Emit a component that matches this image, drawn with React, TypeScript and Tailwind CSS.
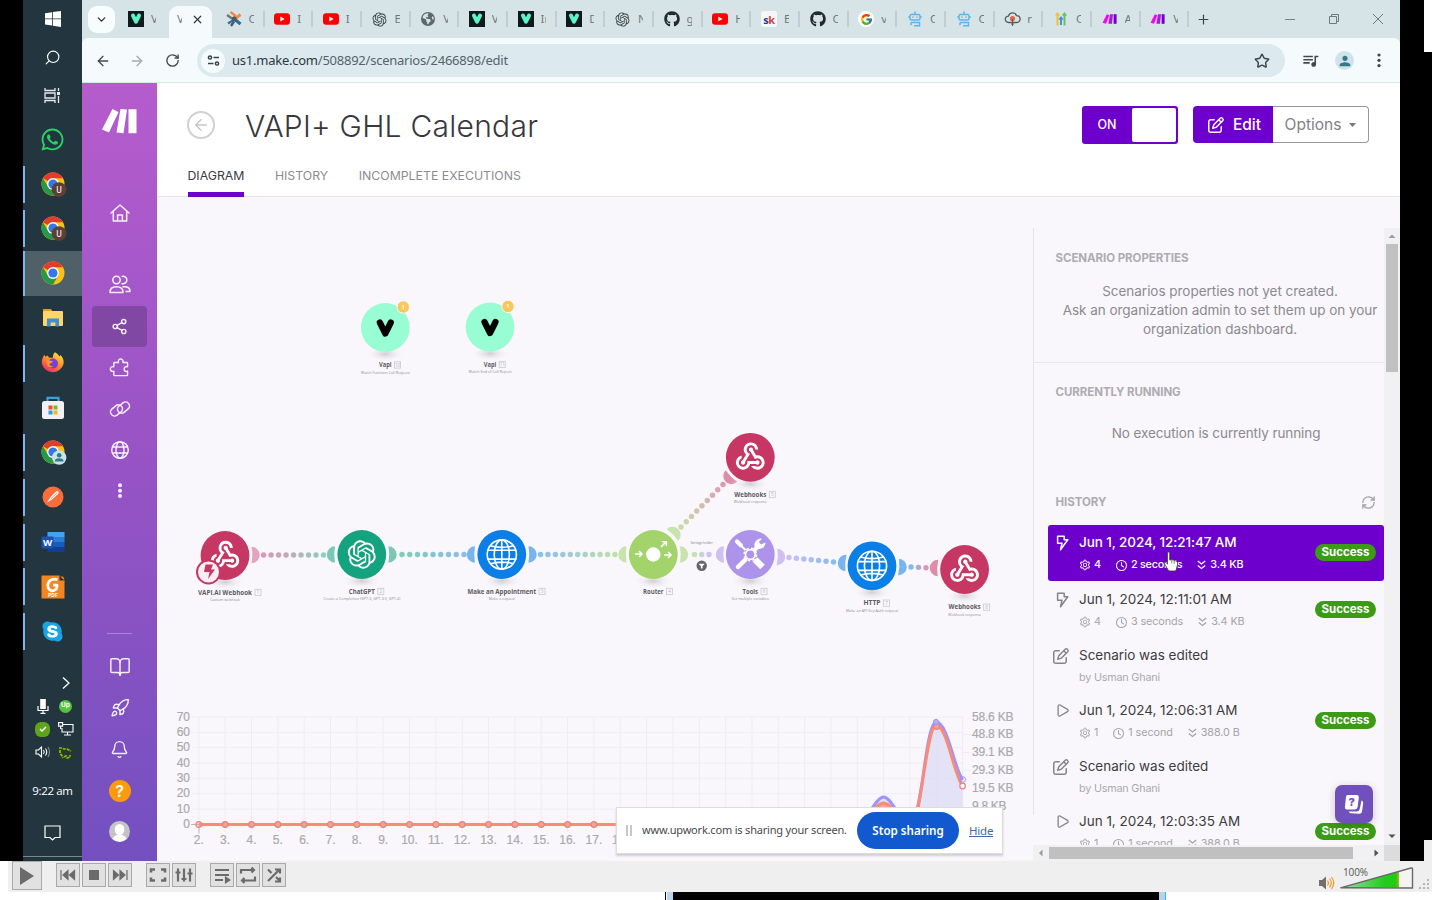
import React from "react";
import { ArrowLeft, ArrowRight, RotateCw, RefreshCw, ChevronDown, Plus, X, Search, Star, Users, Share2, Rocket, Bell, BookOpen, Play } from "lucide-react";
import { FaGithub, FaWhatsapp, FaSkype } from "react-icons/fa";
import { FaRegPenToSquare, FaRegClock, FaEarthAmericas } from "react-icons/fa6";
import { FcGoogle } from "react-icons/fc";
import { RiOpenaiFill } from "react-icons/ri";
import { MdWebhook, MdQueueMusic, MdPerson } from "react-icons/md";
import { AiOutlineSetting } from "react-icons/ai";
import { PiPuzzlePiece } from "react-icons/pi";

/* ---------- small drawings ---------- */

const VapiFav = () => (
  <svg width="16" height="16" viewBox="0 0 16 16" className="shrink-0">
    <rect width="16" height="16" fill="#10191c" />
    <path d="M5 4.6 L8 10.6 L11 4.6" fill="none" stroke="#5cf5c8" strokeWidth="4" strokeLinecap="round" strokeLinejoin="round" />
  </svg>
);
const YoutubeFav = () => (
  <svg width="16" height="16" viewBox="0 0 16 16">
    <rect y="2.2" width="16" height="11.6" rx="3" fill="#f00" />
    <path d="M6.3 5.6 L10.6 8 L6.3 10.4Z" fill="#fff" />
  </svg>
);
const PinwheelFav = () => (
  <svg width="16" height="16" viewBox="0 0 16 16" strokeWidth="2.4" fill="none">
    <path d="M4.500 1 9 4.500 8 7" stroke="#ee8a45" /><path d="M14.500 3.500 10 7" stroke="#f08b46" strokeWidth="3" />
    <path d="M1 4 6 7.500" stroke="#6b7780" /><path d="M14.500 13 9.500 9" stroke="#2c6aa6" strokeWidth="3.200" />
    <path d="M2 12.500 7.500 9" stroke="#2f74b4" /><path d="M5 15 8 10.500" stroke="#4d5a63" /><circle cx="8.200" cy="8" r="2.600" fill="#4d5a63" />
  </svg>
);
const SkFav = () => (
  <div className="flex size-4 items-center justify-center rounded-[3px] bg-[#f7f7f9] font-['Open_Sans',sans-serif] text-[11px] font-bold leading-none tracking-[-0.5px]">
    <span className="text-[#24408e]">s</span><span className="text-[#d8433a]">k</span>
  </div>
);
const RobotFav = () => (
  <svg width="16" height="16" viewBox="0 0 16 16" fill="none" stroke="#5db5ee" strokeWidth="1.5">
    <rect x="3" y="3.4" width="10" height="5.6" rx="1.5" /><path d="M8 3V.6M2.8 6H1.2M13.2 6h1.6M4 11.6h8.5v3.2H7M4 11.6v2.6" />
    <path d="M6 5.4v1.4M10 5.4v1.4" />
  </svg>
);
const CloudFav = () => (
  <svg width="17" height="16" viewBox="0 0 16 16" fill="none">
    <path d="M4 11.5a3.2 3.2 0 0 1 0-6.4 4.2 4.2 0 0 1 8-.4 3.4 3.4 0 0 1 .4 6.8z" stroke="#555d61" strokeWidth="1.3" />
    <circle cx="8" cy="7.6" r="2.6" fill="#e9663c" /><path d="M8 8v7M6.6 13h2.8" stroke="#6d5a55" strokeWidth="1.2" />
  </svg>
);
const ArrowsFav = () => (
  <svg width="16" height="16" viewBox="0 0 16 16" fill="none" strokeWidth="2">
    <path d="M4.500 14.500V3M2.800 4.600 4.500 2.500l1.700 2.100" stroke="#efc22f" /><path d="M8 14V7M6.4 8.600 8 6.500l1.700 2.100" stroke="#3f95df" />
    <path d="M11.500 14.500V3M9.800 4.600 11.500 2.500l1.700 2.100" stroke="#6cc05d" />
  </svg>
);
const MakeFav = () => (
  <svg width="16" height="16" viewBox="0 0 16 16">
    <path d="M4.8 3.2 7.4 4.2 4 12.8 .6 11.8Z" fill="#ff00f5" /><path d="M8 3.2h3L10 12.8H6.4Z" fill="#b514e0" /><path d="M11.600 3.2h3v9.6h-3Z" fill="#6d00cc" />
  </svg>
);

const Chrome = ({ badge }: { badge?: "U" | "person" }) => (
  <svg width="26" height="26" viewBox="0 0 26 26" className="ml-[2px] mt-[1px]">
    <circle cx="12" cy="12" r="11.5" fill="#fbc116" />
    <path d="M12 12 L2 6.3 A11.5 11.5 0 0 1 22 6.3 L12 6.3Z" fill="#e33b2e" />
    <path d="M2 6.3 A11.5 11.5 0 0 0 12 23.5 L17 14.9 L12 17.5 L7.1 15Z" fill="#279847" />
    <circle cx="12" cy="12" r="5.9" fill="#fff" /><circle cx="12" cy="12" r="4.6" fill="#3478e8" />
    {badge === "U" && (<><circle cx="18" cy="17.6" r="7.4" fill="#5c4037" /><text x="18" y="20.800" textAnchor="middle" fontSize="8.500" fontWeight="500" fill="#e8dfdc" fontFamily="Roboto">U</text></>)}
    {badge === "person" && (<><circle cx="18.2" cy="17.6" r="7.2" fill="#c9e3ea" /><circle cx="18.2" cy="15.2" r="2.3" fill="#35788a" /><path d="M13.8 21.4q0-3.2 4.4-3.2t4.4 3.2Z" fill="#35788a" /></>)}
  </svg>
);
const Explorer = () => (
  <svg width="22" height="20" viewBox="0 0 22 20">
    <path d="M1 1h8l2 3H1Z" fill="#e3a008" /><rect x="1" y="3" width="20" height="15" rx="1" fill="#fcd667" />
    <path d="M5 18.5v-8h12v8h-3.6v-4H8.6v4Z" fill="#3c8fd8" />
  </svg>
);
const Firefox = () => (
  <svg width="24" height="24" viewBox="0 0 24 24">
    <defs><linearGradient id="ffx" x1="0.8" y1="0" x2="0.2" y2="1"><stop offset="0" stopColor="#ffe83b" /><stop offset=".45" stopColor="#ff9226" /><stop offset="1" stopColor="#f0226b" /></linearGradient></defs>
    <path d="M14 1.2c3 1.5 3.5 3.4 4.6 4.2l.6-1.4c2.7 2.2 3.9 5.600 3.300 9A11.200 11.200 0 0 1 .8 12.600C.7 9.300 1.500 6 3.500 3.800l.8 2 2.500-1.400 1 2 C10 7 11 7 12 6.400 11.700 4.500 12.400 2.500 14 1.200Z" fill="url(#ffx)" />
    <circle cx="12" cy="12.600" r="5" fill="#7b3fd6" /><path d="M5.500 9.500c3-1 4.500.5 6.500.8-1 1.700-3 1.800-3.600 2.800 0 2 2.300 2.700 4 2-3 3.200-7.200 0-6.900-5.600Z" fill="#ff9a24" />
  </svg>
);
const Store = () => (
  <svg width="24" height="24" viewBox="0 0 24 24">
    <path d="M6.500 6V1.800h11V6" fill="none" stroke="#35a3e2" strokeWidth="2.200" /><rect x="1" y="5" width="22" height="18" rx="2.500" fill="#f1f1f3" />
    <path d="M7.500 9.500h4v4h-4Z" fill="#e8512b" /><path d="M12.500 9.500h4v4h-4Z" fill="#7eb72f" /><path d="M7.500 14.500h4v4h-4Z" fill="#2a9fe2" /><path d="M12.500 14.500h4v4h-4Z" fill="#f4b61e" />
  </svg>
);
const Postman = () => (
  <svg width="22" height="22" viewBox="0 0 22 22"><circle cx="11" cy="11" r="10.500" fill="#fb6c3b" /><path d="M5 16.500 8.500 11l5.500-5.500q2-1 2.500.500t-1 2.500L10 13.500Z" fill="#fff" /><path d="M9 12.500l6-5.500" stroke="#fb6c3b" strokeWidth=".7" /></svg>
);
const Word = () => (
  <svg width="24" height="22" viewBox="0 0 24 22">
    <rect x="6.500" y="1" width="17" height="5.500" fill="#41a3ec" /><rect x="6.500" y="6" width="17" height="5" fill="#2b7cd3" /><rect x="6.500" y="11" width="17" height="5" fill="#185abd" /><rect x="6.500" y="16" width="17" height="5" fill="#103f91" />
    <rect x=".5" y="5.500" width="12" height="12" rx="1" fill="#1a52b0" /><text x="6.500" y="15" textAnchor="middle" fontSize="9.500" fontWeight="700" fill="#fff" fontFamily="Open Sans">W</text>
  </svg>
);
const Pdf = () => (
  <svg width="24" height="24" viewBox="0 0 24 24">
    <path d="M.5.5h18l5 5v18H.5Z" fill="#f4861f" /><path d="M18.500.5v5h5" fill="#26363f" /><path d="M20.500 1.500l2.500 2.500" stroke="#f4861f" strokeWidth="1.500" />
    <path d="M16.500 4.600C10.500 2.800 6.800 6.500 6.800 10.500c0 4 3.500 6 6.200 5 2.500-.8 3.300-2.800 3-5.300h-4" fill="none" stroke="#fff" strokeWidth="2.800" strokeLinejoin="round" />
    <text x="12" y="22.400" textAnchor="middle" fontSize="5" fontWeight="700" fill="#fff" fontFamily="Inter">PDF</text>
  </svg>
);
const Skype = () => (
  <span className="relative flex items-center justify-center before:absolute before:size-[15px] before:rounded-full before:bg-white"><FaSkype size={23} color="#19a5e3" className="relative" /></span>
);

/* ---------- desktop taskbar ---------- */

const apps: { icon: React.ReactNode; open?: boolean; active?: boolean }[] = [
  { icon: <FaWhatsapp size={25} color="#25d366" /> },
  { icon: <Chrome badge="U" />, open: true },
  { icon: <Chrome badge="U" />, open: true },
  { icon: <Chrome />, open: true, active: true },
  { icon: <Explorer /> },
  { icon: <Firefox />, open: true },
  { icon: <Store /> },
  { icon: <Chrome badge="person" />, open: true },
  { icon: <Postman />, open: true },
  { icon: <Word />, open: true },
  { icon: <Pdf />, open: true },
  { icon: <Skype />, open: true },
];

function Taskbar() {
  return (
    <aside className="flex h-full w-[59px] shrink-0 flex-col bg-[#23363f] text-white">
      <div className="flex h-[38px] items-center justify-center">
        <svg width="16" height="16" viewBox="0 0 16 16" fill="#fff"><path d="M0 2.200 7 1.200V7.500H0ZM7.800 1.100 16 0V7.500H7.800ZM0 8.300H7V14.600L0 13.600ZM7.800 8.300H16V16L7.800 14.800Z" /></svg>
      </div>
      <div className="flex h-[38px] items-center justify-center"><Search size={17} strokeWidth={1.6} className="-scale-x-100" /></div>
      <div className="flex h-[41px] items-center justify-center pb-[3px]">
        <svg width="17" height="15" viewBox="0 0 17 15" fill="none" stroke="#e6eaec" strokeWidth="1.300"><path d="M1 0v2.500h10V0M1 15v-2.500h10V15M1 5h10v5H1ZM14.500 0v3M14.500 8v7" /><path d="M13 5.500h3" strokeWidth="3" /></svg>
      </div>
      {apps.map((a, i) => (
        <div key={i} className={`flex h-[44.750px] shrink-0 items-center ${a.active ? "bg-[#4f6068]" : ""}`}>
          <div className={`w-[2px] ${a.open ? "bg-[#76b9ed]" : ""} ${a.active ? "h-full" : "h-[37px]"}`} />
          <div className="flex flex-1 justify-center pr-[2px]">{a.icon}</div>
        </div>
      ))}
      <div className="mt-[22px] flex justify-end pr-[11px]"><svg width="10" height="14" viewBox="0 0 10 14" fill="none" stroke="#fff" strokeWidth="1.300"><path d="M2 1.500 8 7 2 12.500" /></svg></div>
      <div className="mt-[6px] grid grid-cols-2 gap-y-[3px] pl-[8px] pr-[5px]">
        <div className="flex h-5 items-center justify-center"><svg width="12" height="16" viewBox="0 0 12 16" fill="none" stroke="#fff" strokeWidth="1.200"><rect x="3.200" y="1" width="5.600" height="10" fill="#fff" stroke="none" /><path d="M1 8v4.500h10V8M6 12.500V15M3.500 15.300h5" /></svg></div>
        <div className="flex h-5 items-center justify-center"><span className="flex size-[13px] items-center justify-center rounded-full bg-[#56c33c] font-['Inter',sans-serif] text-[6.500px] font-bold">Up</span></div>
        <div className="flex h-5 items-center justify-center"><span className="flex size-[15px] items-center justify-center rounded-[6px] bg-[#5fa51b]"><svg width="8" height="8" viewBox="0 0 8 8" fill="none" stroke="#fff" strokeWidth="1.500"><path d="M1 4l2 2 4-4" /></svg></span></div>
        <div className="flex h-5 items-center justify-center"><svg width="16" height="14" viewBox="0 0 16 14" fill="none" stroke="#fff" strokeWidth="1.100"><path d="M5 2.500h10v7.500H4V6M9.500 10v3M6 13h7M.6.6h4v3.500h-4ZM2.600 4v3" /></svg></div>
        <div className="flex h-5 items-center justify-center"><svg width="16" height="14" viewBox="0 0 16 14" fill="none" stroke="#fff" strokeWidth="1.100"><path d="M1 5h2.500L6.500 2v10L3.500 9H1Z" /><path d="M8.500 5q1.500 2 0 4M10.500 3.500q2.500 3.500 0 7" /><path d="M13 2q3 5 0 10" stroke="#7f8b91" /></svg></div>
        <div className="flex h-5 items-center justify-center"><svg width="15" height="14" viewBox="0 0 15 14" fill="none" stroke="#7fc800" strokeWidth="1.700"><rect width="15" height="14" fill="#2b3532" stroke="none" /><path d="M1 3h3l2 1h3l4 2M2 5v3l2 3 1 2M6 12l2-1 1 2 3-1v-2" strokeDasharray="3 1" /></svg></div>
      </div>
      <div className="mt-[21px] text-center font-['Open_Sans',sans-serif] text-[11.500px] leading-[16px] tracking-[-0.350px]">9:22 am</div>
      <div className="mt-[26px] flex justify-center"><svg width="17" height="16" viewBox="0 0 17 16" fill="none" stroke="#fff" strokeWidth="1.200"><path d="M1 1h15v11.500H11L8.500 15 6 12.500H1Z" /></svg></div>
      <div className="mt-auto h-[5px] border-t border-[#7c898f]" />
    </aside>
  );
}

/* ---------- browser chrome ---------- */

const tabs: [React.ReactNode, string][] = [
  [<PinwheelFav />, "C"], [<YoutubeFav />, "I"], [<YoutubeFav />, "I"], [<RiOpenaiFill size={17} color="#3c4447" />, "E"],
  [<FaEarthAmericas size={14} color="#5f676b" />, "V"], [<VapiFav />, "V"], [<VapiFav />, "In"], [<VapiFav />, "D"],
  [<RiOpenaiFill size={17} color="#3c4447" />, "N"], [<FaGithub size={16} color="#24292f" />, "g"], [<YoutubeFav />, "H"], [<SkFav />, "E"],
  [<FaGithub size={16} color="#24292f" />, "C"], [<span className="flex size-4 items-center justify-center rounded-full bg-white"><FcGoogle size={13} /></span>, "v"],
  [<RobotFav />, "C"], [<RobotFav />, "C"], [<CloudFav />, "r"], [<ArrowsFav />, "C"], [<MakeFav />, "A"], [<MakeFav />, "V"],
];

function TabLetter({ c }: { c: string }) {
  return <span className="w-[5px] overflow-hidden font-['Noto_Sans',sans-serif] text-[11.500px] leading-4 text-[#6f797d]">{c}</span>;
}

function Browser() {
  return (
    <header className="shrink-0 bg-[#d7e4e7]">
      <div className="flex h-[38px] items-center pl-[6px]">
        <div className="flex size-[27px] items-center justify-center rounded-[9px] bg-[#f7fcfd]"><ChevronDown size={13} strokeWidth={2.300} color="#26302f" /></div>
        <div className="ml-[13px] flex w-[36px] items-center gap-[7px]"><VapiFav /><TabLetter c="V" /></div>
        <div className="mt-[6px] flex h-[32px] w-[52px] items-start">
          <div className="h-full w-[5px] rounded-br-[8px] bg-[#d7e4e7]" />
          <div className="flex h-full w-[43px] items-center rounded-t-[9px] bg-[#f5fbfd] pb-[6px] pl-[8px]">
            <TabLetter c="V" /><X size={13} strokeWidth={2.200} className="ml-[9px]" color="#30383a" />
          </div>
        </div>
        {tabs.map(([icon, c], i) => (
          <div key={i} className="flex h-[16px] w-[48.680px] shrink-0 items-center border-r-2 border-[#c3cdd0] pl-[8.500px]">
            <div className="mr-[6px] flex w-[18px] justify-center">{icon}</div><TabLetter c={c} />
          </div>
        ))}
        <Plus size={15} className="ml-[7px]" strokeWidth={1.900} color="#3b4446" />
        <div className="ml-auto flex items-center gap-[34px] pr-[17px]">
          <svg width="10" height="10" stroke="#7b8487" fill="none"><path d="M0 5.500h10" /></svg>
          <svg width="10" height="10" viewBox="0 0 10 10" stroke="#70797b" fill="none"><path d="M.5 2.500h7v7h-7ZM2.500 2.500v-2h7v7h-2" /></svg>
          <svg width="10" height="10" viewBox="0 0 10 10" stroke="#70797b" fill="none"><path d="M0 0l10 10M10 0L0 10" /></svg>
        </div>
      </div>
      <div className="flex h-[45px] items-center rounded-t-[6px] border-b border-[#dce6e9] bg-[#f5fbfd] pl-[13px] pt-px text-[#404b4e]">
        <ArrowLeft size={16} strokeWidth={2} />
        <ArrowRight size={16} strokeWidth={2} className="ml-[18px] text-[#a4abad]" />
        <RotateCw size={15} strokeWidth={2.200} className="ml-[20px]" />
        <div className="ml-[17px] flex h-[33px] w-[1088px] items-center rounded-full bg-[#dceaef] pl-[4px] pr-[15px]">
          <div className="flex size-[24px] items-center justify-center rounded-full bg-[#f5fbfd]">
            <svg width="13" height="11" viewBox="0 0 13 11" fill="none" stroke="#37474b" strokeWidth="1.500"><circle cx="3" cy="2.500" r="1.600" /><path d="M6.500 2.500H12M1 8.500h5.500" /><circle cx="10" cy="8.500" r="1.600" /></svg>
          </div>
          <span className="ml-[7px] font-['Noto_Sans',sans-serif] text-[13px] tracking-[-0.240px] text-[#56636a]"><span className="text-[#2d383d]">us1.make.com</span>/508892/scenarios/2466898/edit</span>
          <Star size={16} strokeWidth={2.200} className="ml-auto" color="#3f484b" />
        </div>
        <MdQueueMusic size={19} className="ml-[16px]" />
        <span className="ml-[15px] flex size-[19px] items-center justify-center rounded-full bg-[#cfe4ea] text-[#35788a]"><MdPerson size={16} /></span>
        <svg width="4" height="15" viewBox="0 0 4 15" className="ml-[23px]" fill="#3b4649"><circle cx="2" cy="2" r="1.600" /><circle cx="2" cy="7.300" r="1.600" /><circle cx="2" cy="12.600" r="1.600" /></svg>
      </div>
    </header>
  );
}

/* ---------- Make side navigation ---------- */

const GlobeNav = () => (
  <svg width="20" height="20" viewBox="0 0 20 20" fill="none" stroke="currentColor" strokeWidth="1.500"><circle cx="10" cy="10" r="8.300" /><ellipse cx="10" cy="10" rx="4" ry="8.300" /><path d="M2.200 7h15.600M2.200 13h15.600" /></svg>
);
const LinkNav = () => (
  <svg width="22" height="18" viewBox="0 0 22 18" fill="none" stroke="currentColor" strokeWidth="1.500"><rect x="1" y="6.400" width="13" height="8" rx="4" transform="rotate(-38 7.500 10.400)" /><rect x="8" y="3.600" width="13" height="8" rx="4" transform="rotate(-38 14.500 7.600)" /></svg>
);
const HomeNav = () => (
  <svg width="20" height="18" viewBox="0 0 20 18" fill="none" stroke="currentColor" strokeWidth="1.500" strokeLinejoin="round" strokeLinecap="round"><path d="M1 9 10 1l9 8M3.300 7.500V17h13.400V7.500M7.600 17v-6h4.800v6" /></svg>
);
const UsersNav = () => (
  <svg width="22" height="19" viewBox="0 0 22 19" fill="none" stroke="currentColor" strokeWidth="1.500" strokeLinejoin="round"><circle cx="7.500" cy="5" r="3.700" /><path d="M12.500 1.700a3.700 3.700 0 1 1 0 6.600M1 17.500c0-4 2.500-5.700 6.500-5.700s6.500 1.700 6.500 5.700ZM13.500 11.800h2c3.500 0 5.500 1.700 5.500 4.700h-4.500" /></svg>
);

function NavItem({ children, active }: { children: React.ReactNode; active?: boolean }) {
  return <div className={`flex h-[41.300px] w-[55px] shrink-0 items-center justify-center rounded-[4px] text-white/90 ${active ? "bg-[#8048a3]" : ""}`}>{children}</div>;
}

function SideNav() {
  return (
    <nav className="flex h-full w-[75px] shrink-0 flex-col items-center bg-linear-to-b from-[#b65ccd] via-[#9653c5] to-[#7350c0]">
      <svg width="36" height="26" viewBox="0 0 36 26" className="mr-[1px] mt-[25px]" fill="#fff"><path d="M11.500 1 17.500 4 8 24.500 1 21.500ZM19.500 1l6.500.5L22.500 25.200l-7-.8ZM27.500 1.200H35.500V25.200h-8Z" /></svg>
      <div className="mt-[58px] flex flex-col items-center">
        <NavItem><HomeNav /></NavItem>
        <div className="mt-[31px]" />
        <NavItem><UsersNav /></NavItem>
        <NavItem active><Share2 size={17} strokeWidth={2} /></NavItem>
        <NavItem><PiPuzzlePiece size={22} /></NavItem>
        <NavItem><LinkNav /></NavItem>
        <NavItem><GlobeNav /></NavItem>
        <NavItem><svg width="6" height="16" viewBox="0 0 6 16" fill="currentColor"><circle cx="3" cy="2.300" r="2" /><circle cx="3" cy="7.700" r="2" /><circle cx="3" cy="13.100" r="2" /></svg></NavItem>
      </div>
      <div className="mt-[121px] mb-[12px] h-px w-[25px] bg-white/30" />
      <NavItem><BookOpen size={22} strokeWidth={1.600} /></NavItem>
      <NavItem><Rocket size={20} strokeWidth={1.700} /></NavItem>
      <NavItem><Bell size={19} strokeWidth={1.700} /></NavItem>
      <NavItem><span className="flex size-[22px] items-center justify-center rounded-full bg-[#fb9a0a] font-['Inter',sans-serif] text-[16px] font-semibold text-white">?</span></NavItem>
      <NavItem><svg width="21" height="21" viewBox="0 0 21 21"><circle cx="10.500" cy="10.500" r="10.500" fill="#c4c4c6" /><ellipse cx="10.500" cy="8.500" rx="4.800" ry="5.500" fill="#fff" /><path d="M3.500 18q1-4 7-4.500 6 .5 7 4.500a10.500 10.500 0 0 1-14 0Z" fill="#fff" /></svg></NavItem>
    </nav>
  );
}

/* ---------- scenario diagram ---------- */

const RED = "#c73763", BLUE = "#0b7fe6", GREEN = "#14a37f", LIME = "#a2d46b", LILAC = "#ad94ea";

function Globe({ x, y }: { x: number; y: number }) {
  return (
    <g fill="none" stroke="#fff" strokeWidth="1.600" transform={`translate(${x} ${y})`}>
      <circle r="14.600" /><ellipse rx="7.600" ry="14.600" /><path d="M0-14.600V14.600M-14.600-4.200H14.600M-14.600 4.600H14.600M-11.500-8.800Q0-5.500 11.500-8.800M-11.500 9.200Q0 6 11.500 9.200" />
    </g>
  );
}
function Label({ x, y, name, w, tag, sub, sw, subY = 7.500 }: { x: number; y: number; name: string; w: number; tag: string; sub?: string; sw?: number; subY?: number }) {
  return (
    <g fontFamily="Open Sans, sans-serif">
      <text x={x - w / 2} y={y + 2.200} fontSize="7" fontWeight="700" fill="#5c5c61" textLength={w} lengthAdjust="spacingAndGlyphs">{name}</text>
      <rect x={x + w / 2 + 3} y={y - 3.200} width="6" height="6.300" fill="none" stroke="#cfcdd3" strokeWidth=".9" />
      <text x={x + w / 2 + 6} y={y + 1.700} fontSize="4.500" fill="#b5b3b9" textAnchor="middle">{tag}</text>
      {sub && sw && <text x={x - sw / 2} y={y + subY + 1.200} fontSize="4" fill="#8d8b92" textLength={sw} lengthAdjust="spacingAndGlyphs">{sub}</text>}
    </g>
  );
}
function Node({ x, y, fill, children }: { x: number; y: number; fill: string; children?: React.ReactNode }) {
  return (
    <g>
      <ellipse cx={x} cy={y + 26.500} rx="20" ry="8" fill="url(#shade)" />
      <circle cx={x} cy={y} r="24.400" fill={fill} />
      {children}
    </g>
  );
}
function Ear({ x, y, dir, fill }: { x: number; y: number; dir: number; fill: string }) {
  return <path d="M0-8.200A8.200 8.200 0 0 1 0 8.200Q1.600 0 0-8.200Z" transform={`translate(${x} ${y}) rotate(${dir})`} fill={fill} opacity=".55" />;
}
function mix(a: string, b: string, t: number) {
  const p = (s: string, i: number) => parseInt(s.slice(i, i + 2), 16);
  return `rgb(${[1, 3, 5].map((i) => Math.round(p(a, i) * (1 - t) + p(b, i) * t)).join(",")})`;
}
function Dots({ from, to, n, a, b }: { from: [number, number]; to: [number, number]; n: number; a: string; b: string }) {
  return (
    <g opacity=".9">
      {Array.from({ length: n }, (_, i) => {
        const t = i / (n - 1);
        return <circle key={i} cx={from[0] + (to[0] - from[0]) * t} cy={from[1] + (to[1] - from[1]) * t} r="2.700" fill={mix(a, b, t)} />;
      })}
    </g>
  );
}

const gx = (i: number) => 198.800 + i * 26.340;

function Diagram() {
  return (
    <svg width="876" height="664" viewBox="157 197 876 664" className="shrink-0">
      <defs>
        <radialGradient id="shade"><stop offset="0" stopColor="#cfcdd2" /><stop offset="1" stopColor="#f9f7fb" stopOpacity="0" /></radialGradient>
      </defs>

      {[[385.300, 327.500, "10", "Watch Function Call Request", 49], [490, 327, "11", "Watch End of Call Report", 43]].map(([x, y, tag, sub, sw]) => (
        <g key={tag as string}>
          <Node x={x as number} y={y as number} fill="#98fdd2">
            <path d={`M${(x as number) - 5.500} ${(y as number) - 5} l5.500 11 l5.500 -11`} fill="none" stroke="#000" strokeWidth="6.200" strokeLinecap="round" strokeLinejoin="round" />
            <circle cx={(x as number) + 18} cy={(y as number) - 20.500} r="6.200" fill="#fcc75a" stroke="#f9f7fb" strokeWidth="1" />
            <text x={(x as number) + 18} y={(y as number) - 18.600} fontSize="5" fontWeight="700" fill="#fff" textAnchor="middle" fontFamily="Open Sans">1</text>
          </Node>
          <Label x={x as number} y={(y as number) + 37.500} name="Vapi" w={12.500} tag={tag as string} sub={sub as string} sw={sw as number} />
        </g>
      ))}

      <Dots from={[263.600, 555]} to={[323.500, 555]} n={9} a="#d98da8" b="#84cbb6" />
      <Dots from={[402, 554.500]} to={[464, 554.500]} n={9} a="#73c8b0" b="#7fb8ee" />
      <Dots from={[540.500, 554.500]} to={[615, 554.500]} n={11} a="#80b9ed" b="#b9dfa0" />
      <Dots from={[681, 527]} to={[723, 484.500]} n={9} a="#c0dc9e" b="#dd90aa" />
      <Dots from={[694.500, 554.500]} to={[709, 554.500]} n={3} a="#c6ddb0" b="#cabcf1" />
      <Dots from={[789, 557.500]} to={[833.500, 562]} n={7} a="#c7b9f1" b="#7db7ed" />
      <Dots from={[911, 567]} to={[926, 567.700]} n={3} a="#75b3ec" b="#dc8dab" />

      <Ear x={251.500} y={555} dir={0} fill="#d3608a" /><Ear x={335} y={554.500} dir={180} fill={GREEN} />
      <Ear x={388.500} y={554.500} dir={0} fill={GREEN} /><Ear x={475} y={554.500} dir={180} fill={BLUE} />
      <Ear x={528.500} y={554.500} dir={0} fill={BLUE} /><Ear x={626.500} y={554.500} dir={180} fill={LIME} />
      <Ear x={680} y={554.500} dir={0} fill={LIME} /><Ear x={672.500} y={535} dir={-45} fill={LIME} />
      <Ear x={731.500} y={476} dir={135} fill={RED} /><Ear x={724} y={554.500} dir={180} fill={LILAC} />
      <Ear x={777} y={557} dir={3} fill={LILAC} /><Ear x={846} y={563} dir={184} fill={BLUE} />
      <Ear x={898.500} y={567} dir={3} fill={BLUE} /><Ear x={938} y={568} dir={182} fill={RED} />

      <Node x={225} y={555.500} fill={RED}><MdWebhook x={208} y={538} size={34} color="#fff" /></Node>
      <circle cx="208.500" cy="572" r="11.500" fill="#fbeef3" stroke={RED} strokeWidth="2" />
      <path d="M205.500 564.500h7.500l-2 5h4l-7 9.500 1.500-7h-5.500Z" fill={RED} />
      <Label x={225} y={592.500} name="VAPI.AI Webhook" w={54} tag="1" sub="Custom webhook" sw={30} />

      <Node x={361.800} y={554.500} fill={GREEN}><RiOpenaiFill x={344.800} y={537.500} size={34} color="#fff" /></Node>
      <Label x={361.800} y={591.500} name="ChatGPT" w={26} tag="2" sub="Create a Completion (GPT-3, GPT-3.5, GPT-4)" sw={77} />

      <Node x={501.800} y={554.500} fill={BLUE}><Globe x={501.800} y={554.500} /></Node>
      <Label x={501.800} y={591.500} name="Make an Appointment" w={68.500} tag="3" sub="Make a request" sw={26} />

      <Node x={653.300} y={554.500} fill={LIME}>
        <circle cx="653.300" cy="554.500" r="7.200" fill="#fff" />
        <path d="M635 554h7M639 551l3 3-3 3M664 555h7M668 552l3 3-3 3M661 547l5-5M662 541.700h4.300v4.300" fill="none" stroke="#fff" strokeWidth="1.600" />
      </Node>
      <Label x={653.300} y={591.500} name="Router" w={20.500} tag="4" />

      <text x="690.500" y="544.300" fontSize="3.800" fill="#8d8b92" textLength="22.500" fontFamily="Open Sans">Set tags holder</text>
      <circle cx="701.700" cy="565.800" r="5.200" fill="#66656b" /><path d="M698.700 563.700h6l-2.200 2.600v2.200h-1.600v-2.200Z" fill="#fff" />

      <Node x={750.300} y={457.300} fill={RED}><MdWebhook x={733} y={439.500} size={34.500} color="#fff" /></Node>
      <Label x={750.300} y={494.500} name="Webhooks" w={32} tag="5" sub="Webhook response" sw={33} />

      <Node x={750.300} y={554.500} fill={LILAC}>
        <g fill="none" stroke="#fff" strokeLinecap="round">
          <path d="M736.500 541l8.500 8.500" strokeWidth="2.200" /><path d="M737 541.500l3.800 3.800" strokeWidth="4.200" />
          <path d="M755 559.500l7.500 7.500" strokeWidth="6.500" strokeLinecap="butt" />
          <path d="M738 567l7-7" strokeWidth="4.500" /><path d="M755 549.500l4-4" strokeWidth="4" />
        </g>
        <path d="M762 538.500a6.500 6.500 0 0 0-7 9 6.500 6.500 0 0 0 10.500-5l-4.500 2-2.200-2.500Z" fill="#fff" />
        <circle cx="750.300" cy="554.500" r="4.800" fill={LILAC} stroke="#fff" strokeWidth="1.800" />
        <circle cx="750.300" cy="554.500" r="6.300" fill="none" stroke="#fff" strokeWidth="1.400" strokeDasharray="2.500 2.450" />
      </Node>
      <Label x={750.300} y={591.500} name="Tools" w={15.500} tag="6" sub="Set multiple variables" sw={37} />

      <Node x={872} y={565.800} fill={BLUE}><Globe x={872} y={565.800} /></Node>
      <Label x={872} y={603.200} name="HTTP" w={17} tag="7" sub="Make an API Key Auth request" sw={52} />

      <Node x={964.600} y={569.500} fill={RED}><MdWebhook x={947.300} y={551.700} size={34.500} color="#fff" /></Node>
      <Label x={964.600} y={607.200} name="Webhooks" w={32} tag="8" sub="Webhook response" sw={33} />

      <g stroke="#efedf1" strokeWidth="1">
        {Array.from({ length: 8 }, (_, i) => <path key={i} d={`M192 ${717 + i * 15.350}H963`} />)}
        {Array.from({ length: 30 }, (_, i) => <path key={i} d={`M${gx(i)} 717V832`} />)}
        {[734.500, 752.500, 770.500].map((y) => <path key={y} d={`M963 ${y}h8`} />)}
      </g>
      <path d="M191 824.500h8v9" fill="none" stroke="#b9b8bc" />
      <path d="M857 824.500C866 824.500 875 797 883.600 797S901 824.500 910 824.500C922 824.500 925 722 936.300 722S954 768 962.700 780V824.500Z" fill="#dcdbf5" opacity=".75" />
      <path d="M857 824.500C866 824.500 875 797 883.600 797S901 824.500 910 824.500C922 824.500 925 722 936.300 722S954 768 962.700 780" fill="none" stroke="#9c95fa" strokeWidth="3" />
      <path d="M857 824.500C866 824.500 875 803 883.600 803S901 824.500 910 824.500Z" fill="#f98b79" opacity=".7" />
      <path d="M199 824.500H857C866 824.500 875 803 883.600 803S901 824.500 910 824.500C922 824.500 925.500 725.500 936.300 725.500S954 776 962.700 786" fill="none" stroke="#f98b79" strokeWidth="3" />
      <g stroke="#ef7f77" strokeWidth="1.200" fill="#f0a29c">
        {Array.from({ length: 16 }, (_, i) => <circle key={i} cx={gx(i)} cy="824.500" r="2.900" fillOpacity={i ? 1 : .25} />)}
        <circle cx="936.500" cy="726.500" r="2.800" /><circle cx="962.600" cy="786" r="2.800" fill="#f9f7fb" />
      </g>
      <circle cx="962.800" cy="779.500" r="2.800" fill="none" stroke="#9c95fa" />
      <circle cx="936" cy="722" r="2.600" fill="#b4aef3" stroke="#9c95fa" />
      <g fontFamily="Liberation Sans, sans-serif" fontSize="12" fill="#aaa9ad" stroke="#aaa9ad" strokeWidth=".2">
        {[70, 60, 50, 40, 30, 20, 10, 0].map((v, i) => <text key={v} x="190" y={720.600 + i * 15.350} textAnchor="end">{v}</text>)}
        {Array.from({ length: 17 }, (_, i) => <text key={i} x={gx(i)} y="844" textAnchor="middle">{i + 2}.</text>)}
        {["58.6", "48.8", "39.1", "29.3", "19.5", "9.8"].map((v, i) => <text key={v} x="972" y={720.600 + i * 17.800} textLength={i === 5 ? 34.500 : 41.500}>{v} KB</text>)}
      </g>
    </svg>
  );
}

/* ---------- right panel ---------- */

type Row = { kind: "bolt" | "edit" | "play"; title: string; ops?: string; time?: string; size?: string; by?: string; active?: boolean };
const rows: Row[] = [
  { kind: "bolt", title: "Jun 1, 2024, 12:21:47 AM", ops: "4", time: "2 seconds", size: "3.4 KB", active: true },
  { kind: "bolt", title: "Jun 1, 2024, 12:11:01 AM", ops: "4", time: "3 seconds", size: "3.4 KB" },
  { kind: "edit", title: "Scenario was edited", by: "by Usman Ghani" },
  { kind: "play", title: "Jun 1, 2024, 12:06:31 AM", ops: "1", time: "1 second", size: "388.0 B" },
  { kind: "edit", title: "Scenario was edited", by: "by Usman Ghani" },
  { kind: "play", title: "Jun 1, 2024, 12:03:35 AM", ops: "1", time: "1 second", size: "388.0 B" },
];

function RowIcon({ kind }: { kind: Row["kind"] }) {
  if (kind === "edit") return <FaRegPenToSquare size={16} className="-ml-[3px]" />;
  if (kind === "play") return <Play size={15} strokeWidth={2.100} className="-ml-[1px]" />;
  return <svg width="13" height="16" viewBox="0 0 13 16" fill="none" stroke="currentColor" strokeWidth="1.500" strokeLinejoin="round"><path d="M1.600 1.200H8.200V4.800H11.800L4.500 14.800 6 8.200H1.600Z" /></svg>;
}

function HistoryRow({ r }: { r: Row }) {
  return (
    <div className={`ml-[15px] flex shrink-0 items-start rounded-l-[3px] pl-[8px] ${r.active ? "mb-[1px] h-[56px] rounded-r-[3px] bg-[#6d00cc] text-white" : "h-[55.500px] text-[#85848a]"}`}>
      <div className="flex w-[23px] items-center pt-[10px]"><RowIcon kind={r.kind} /></div>
      <div className="flex-1">
        <div className={`mt-[7px] text-[13.500px] leading-[20px] ${r.active ? "font-medium tracking-[-0.100px]" : "tracking-[-0.020px] text-[#3d3c40]"}`}>{r.title}</div>
        {r.by ? (
          <div className="mt-[5px] text-[10.800px] leading-[16px] tracking-[-0.200px] text-[#aaa9ae]">{r.by}</div>
        ) : (
          <div className={`mt-[5px] flex items-center text-[10.800px] leading-[16px] ${r.active ? "font-medium tracking-[-0.220px]" : "tracking-[-0.080px] text-[#a5a4a9]"}`}>
            <AiOutlineSetting size={12} className="mr-[3px]" />{r.ops}
            <FaRegClock size={11} className="ml-[15px] mr-[4px]" />{r.time}
            <svg width="9" height="10" viewBox="0 0 9 10" fill="none" stroke="currentColor" strokeWidth="1.300" className="ml-[15px] mr-[4px]"><path d="M.8 1l3.700 3L8.200 1M.8 5.500l3.700 3 3.700-3" /></svg>{r.size}
          </div>
        )}
      </div>
      {!r.by && <span className="mr-[8px] mt-[19px] flex h-[17px] w-[61px] items-center justify-center rounded-full bg-[#3b9b14] pt-px text-[11.500px] font-bold text-white">Success</span>}
    </div>
  );
}

const heading = "text-[11.500px] leading-4 font-bold tracking-[-0.060px] text-[#adacb1]";

function Panel() {
  return (
    <div className="flex w-[367px] flex-col pt-[31px] font-['Inter',sans-serif]">
      <div className="flex h-[617px]">
        <div className="relative flex w-[351px] flex-col overflow-hidden before:absolute before:left-0 before:top-0 before:h-[587px] before:w-px before:bg-[#e6e4e9]">
          <div className="h-[135px] shrink-0 border-b border-[#e9e7ec] pt-[22px]">
            <div className={`${heading} pl-[22.500px]`}>SCENARIO PROPERTIES</div>
            <div className="mt-[16px] whitespace-nowrap pl-[23px] text-center text-[13.500px] leading-[19px] tracking-[-0.030px] text-[#8b8a8f]">Scenarios properties not yet created.<br />Ask an organization admin to set them up on your<br />organization dashboard.</div>
          </div>
          <div className={`${heading} mt-[21px] pl-[22.500px]`}>CURRENTLY RUNNING</div>
          <div className="mt-[23px] pl-[15px] text-center text-[13.500px] leading-[20px] tracking-[-0.080px] text-[#8b8a8f]">No execution is currently running</div>
          <div className="mt-[51px] mb-[15px] flex items-center justify-between pl-[22.500px] pr-[8px]"><span className={heading}>HISTORY</span><RefreshCw size={15} strokeWidth={2.100} color="#a3a2a7" /></div>
          {rows.map((r, i) => <HistoryRow key={i} r={r} />)}
        </div>
        <div className="flex w-[16px] flex-col items-center bg-[#f1f0f3]">
          <svg width="16" height="16" viewBox="0 0 16 16" fill="#9c9b9f"><path d="M4.500 10h7L8 6.500Z" /></svg>
          <div className="h-[128px] w-[12px] bg-[#c0c0c1]" />
          <svg width="16" height="16" viewBox="0 0 16 16" fill="#505053" className="mt-auto"><path d="M4.500 5.500h7L8 9Z" /></svg>
        </div>
      </div>
      <div className="flex h-[16px] items-center bg-[#f1f0f3]">
        <svg width="16" height="16" viewBox="0 0 16 16" fill="#9c9b9f"><path d="M9.500 4.500v7L6 8Z" /></svg>
        <div className="h-[12px] w-[304px] bg-[#c0c0c1]" />
        <svg width="16" height="16" viewBox="0 0 16 16" fill="#505053" className="ml-[15px]"><path d="M6.500 4.500v7L10.500 8Z" /></svg>
        <div className="ml-auto h-full w-[16px] bg-[#dcdbde]" />
      </div>
    </div>
  );
}

function Main() {
  return (
    <main className="flex min-w-0 flex-1 flex-col bg-[#f9f7fb] font-['Inter',sans-serif]">
      <div className="flex h-[114px] shrink-0 flex-col border-b border-[#e3e2e5] bg-white">
        <div className="flex h-[84px] items-center pl-[30px] pr-[31px]">
          <span className="flex size-[28px] items-center justify-center rounded-full border-2 border-[#d0cfd2] text-[#c6c5c8]"><ArrowLeft size={18} strokeWidth={1.900} /></span>
          <h1 className="ml-[30px] mt-[1px] text-[30px] font-light leading-none tracking-[0.250px] text-[#38373c]">VAPI+ GHL Calendar</h1>
          <div className="ml-auto flex h-[38px] w-[96px] items-stretch rounded-[3px] bg-[#6d00cc] p-[2px]">
            <span className="flex flex-1 items-center justify-center pr-[2px] text-[12.500px] font-medium text-white">ON</span>
            <span className="w-[44px] rounded-[2px] bg-white" />
          </div>
          <div className="mb-[1px] ml-[15px] flex h-[37px] w-[176px]">
            <div className="flex w-[80px] items-center justify-center gap-[9px] rounded-l-[4px] bg-[#6d00cc] pl-[3px] text-[15.500px] font-medium text-white"><FaRegPenToSquare size={16} />Edit</div>
            <div className="flex flex-1 items-center justify-center gap-[8px] rounded-r-[4px] border border-l-0 border-[#97969a] text-[15.500px] text-[#828186]">Options<svg width="7" height="4" viewBox="0 0 7 4" fill="#77767b"><path d="M0 0h7L3.500 4Z" /></svg></div>
          </div>
        </div>
        <div className="flex flex-1 items-stretch gap-[30.500px] pl-[30.500px] text-[12.300px] leading-[17px] text-[#8d8c91]">
          <span className="-mb-px border-b-[5px] border-[#6d00cc] text-[#3b3a3f]">DIAGRAM</span><span>HISTORY</span><span>INCOMPLETE EXECUTIONS</span>
        </div>
      </div>
      <div className="flex h-[664px]"><Diagram /><Panel /></div>
    </main>
  );
}

/* ---------- player bar ---------- */

const players: [number, React.ReactNode][] = [
  [14, <path d="M5 6.500v10M12 7v9L7 11.500ZM18.500 7v9l-5-4.500Z" />],
  [2, <path d="M7 6.500h10v10H7Z" stroke="none" />],
  [2, <path d="M19 6.500v10M5.500 7v9l5-4.500ZM12 7v9l5-4.500Z" />],
  [14, <path fill="none" strokeWidth="2.600" d="M5 9V6h4M15 6h4v3M19 14v3h-4M9 17H5v-3" />],
  [2, <path fill="none" strokeWidth="2.200" d="M6 5v13M3.500 9h5M12 5v13M9.500 15.500h5M18 5v13M15.500 10h5" />],
  [14, <path fill="none" strokeWidth="2.200" d="M5 6.500h14M5 11.500h14M5 16.500h8M16 14.500l3 2-3 2Z" />],
  [2, <path fill="none" strokeWidth="2.200" d="M5 10V6.500h13M15.500 4l2.500 2.500L15.500 9M19 13v4H6M8.500 14.500 6 17l2.500 2.500" />],
  [2, <path fill="none" strokeWidth="2.200" d="M6 6l3.500 3.500M6 17.500 17.500 6M13 6h5v4M14 13.500l4 4M13 18h5v-4" />],
];

function PlayerBar() {
  return (
    <div className="ml-[8px] flex h-[31px] w-[1424px] shrink-0 items-start bg-[#efefef]">
      <div className="ml-[4px] flex h-[29px] w-[30px] items-center justify-center border border-[#a9a9a9] bg-[#e1e1e1]"><svg width="14" height="18" viewBox="0 0 14 18" fill="#6b6b6b"><path d="M0 0v18l14-9Z" /></svg></div>
      {players.map(([gap, d], i) => (
        <React.Fragment key={i}>
          <div className={gap === 14 ? "w-[14px]" : "w-[2px]"} />
          <div className="mt-[2px] flex size-[24px] items-center justify-center border border-[#a9a9a9] bg-[#e1e1e1]"><svg width="22" height="22" viewBox="1 0.500 22 22" fill="#6b6b6b" stroke="#6b6b6b" strokeWidth="1.200">{d}</svg></div>
        </React.Fragment>
      ))}
      <svg width="120" height="31" viewBox="1312 861 120 31" className="ml-auto">
        <defs><linearGradient id="vol"><stop offset="0" stopColor="#a5dca5" /><stop offset=".75" stopColor="#1ccf1c" /><stop offset=".95" stopColor="#22cc12" /><stop offset="1" stopColor="#b7b11e" /></linearGradient></defs>
        <path d="M1319 880h3l4-3.500v13l-4-3.500h-3Z" fill="#6f6f6f" />
        <path d="M1327.500 880.500q2 2.500 0 5M1329.500 878.500q3.500 4.500 0 9M1331.500 877q4.500 6 0 12" fill="none" stroke="#f39a28" strokeWidth="1.200" />
        <path d="M1341 887.500 1399 871.500V887.500Z" fill="url(#vol)" /><path d="M1399 871.500 1412 868V887.500H1399Z" fill="#f4f4f4" />
        <path d="M1340.500 887.800 1411 868q1.500-.3 1.500 1V888Z" fill="none" stroke="#686868" strokeWidth="1.400" />
        <text x="1343" y="876" fontSize="10" fill="#555" textLength="25" fontFamily="Open Sans">100%</text>
        <g fill="#b5b5b5">{[[1427, 880], [1427, 884], [1423, 884], [1427, 888], [1423, 888], [1419, 888]].map(([x, y]) => <rect key={`${x}-${y}`} x={x} y={y - 1} width="2" height="2" />)}</g>
      </svg>
    </div>
  );
}

export default function App() {
  return (
    <div className="relative flex h-[900px] w-[1440px] flex-col overflow-hidden bg-white">
      <div className="flex h-[861px] shrink-0">
        <div className="w-[23px] shrink-0 bg-black" />
        <Taskbar />
        <div className="flex w-[1318px] shrink-0 flex-col">
          <Browser />
          <div className="flex h-[778px]"><SideNav /><Main /></div>
        </div>
        <div className="w-[24px] shrink-0 bg-black" />
        <div className="flex w-[8px] shrink-0 flex-col"><div className="h-[52px]" /><div className="h-[788px] bg-black" /><div className="flex-1 bg-[#efefef]" /></div>
      </div>
      <PlayerBar />
      <div className="ml-[665px] flex h-[8px] w-[501px] border-x border-l-black border-r-[#22c3ee]"><div className="w-[7px] border-l border-white bg-[#b9d4ee]" /><div className="flex-1 bg-black" /><div className="w-[6px] bg-[#b9cfea]" /></div>

      <div className="absolute left-[616px] top-[807px] flex h-[47px] w-[387px] items-center border border-[#dddce0] bg-white font-['Noto_Sans',sans-serif] text-[12px] shadow-[0_2px_2px_#cfced2]">
        <svg width="6" height="12" viewBox="0 0 6 12" className="ml-[9px]" stroke="#b5b5b8" strokeWidth="1.500"><path d="M1 0v11M5 0v11" /></svg>
        <span className="ml-[10px] whitespace-nowrap text-[11px] tracking-[-0.190px] text-[#48494d]">www.upwork.com is sharing your screen.</span>
        <span className="absolute left-[240px] top-[4px] flex h-[37px] w-[102px] items-center justify-center rounded-full bg-[#1259d0] text-[11.600px] font-semibold text-white">Stop sharing</span>
        <span className="absolute left-[352px] top-[14px] text-[11.500px] leading-[17px] tracking-[-0.200px] text-[#3b6cae] underline">Hide</span>
      </div>

      <div className="absolute left-[1335px] top-[785px] flex size-[38px] items-center justify-center rounded-[7px] bg-[#7150bd] shadow-[0_2px_8px_#00000030]">
        <svg width="20" height="21" viewBox="0 0 20 21"><path d="M17.500 6.500q2 .5 1.700 2.500l-1.200 8.500q-.4 2.300-2.800 2.200L7 19.300q-2-.2-2.300-1.800h8q2.500 0 3-2.500Z" fill="#fff" /><path d="M3.500 1h9q2.600 0 2.300 2.500L13.600 13q-.4 2.400-2.800 2.400H3Q.6 15.400.9 13L2 3q.3-1.800 1.500-2Z" fill="#fff" /><text x="7.800" y="12" textAnchor="middle" fontSize="11" fontWeight="800" fill="#7150bd" fontFamily="Inter">?</text></svg>
      </div>

      <svg width="16" height="21" viewBox="0 0 16 21" className="absolute left-[1163px] top-[551px]"><path d="M4.500 1.500q1.500-1 2.200.5V9q3-.8 6.800 1.200 1.500.8 1 3.500l-1.200 4.800q-.4 1.500-2 1.500H7q-1.200 0-2-1.300L1.500 13q-.8-1.500.5-1.800 1.300 0 2.500 2Z" fill="#fff" stroke="#3b3a40" strokeWidth=".8" /><path d="M8.800 9.500v3M11.200 10v2.800" stroke="#555" strokeWidth=".7" /></svg>
    </div>
  );
}
